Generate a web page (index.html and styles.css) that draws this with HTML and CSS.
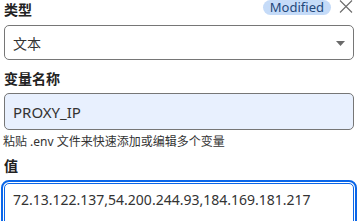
FILE: index.html
```html
<!DOCTYPE html>
<html lang="zh">
<head>
<meta charset="utf-8">
<link rel="stylesheet" href="styles.css">
</head>
<body>
<div class="panel">
  <div class="head">
    <label class="lbl">类型</label>
    <div class="tools">
      <span class="badge">Modified</span>
      <span class="close"><svg width="14" height="13" viewBox="0 0 14 13"><path d="M1 0.5 L13 12.5 M13 0.5 L1 12.5" stroke="#6b6b6b" stroke-width="1.1" fill="none"/></svg></span>
    </div>
  </div>
  <div class="select">
    <span>文本</span>
    <svg class="arrow" width="9" height="5" viewBox="0 0 9 5"><path d="M0 0 H9 L4.5 5 Z" fill="#6a6a6a"/></svg>
  </div>
  <label class="lbl lbl2">变量名称</label>
  <div class="input">PROXY_IP</div>
  <div class="hint">粘贴 .env 文件来快速添加或编辑多个变量</div>
  <label class="lbl lbl3">值</label>
  <div class="ta">72.13.122.137,54.200.244.93,184.169.181.217</div>
</div>
</body>
</html>
```
FILE: styles.css
```css
html, body {
  margin: 0;
  padding: 0;
  background: #fff;
  overflow: hidden;
}
.panel {
  width: 350px;
  padding: 0 5px 0 4px;
  font-family: "Noto Sans", "Noto Sans CJK SC", sans-serif;
  color: #222;
}
.head {
  display: flex;
  justify-content: space-between;
  align-items: flex-start;
  height: 20px;
  margin-bottom: 5px;
}
.lbl {
  display: block;
  font-size: 14px;
  line-height: 20px;
  font-weight: 700;
  color: #222;
}
.tools {
  display: flex;
  align-items: flex-start;
  gap: 8px;
}
.badge {
  height: 15px;
  padding: 0 7px;
  border-radius: 0 0 8px 8px / 0 0 8px 8px;
  border-radius: 8px;
  background: #c5dbf8;
  color: #23477a;
  font-size: 13px;
  line-height: 15px;
}
.close {
  display: flex;
  margin-right: 1px;
}
.select {
  box-sizing: border-box;
  height: 35px;
  border: 1px solid #767676;
  border-radius: 5px;
  display: flex;
  align-items: center;
  justify-content: space-between;
  padding: 0 8px;
  font-size: 14px;
  color: #333;
}
.arrow {
  margin-top: 1px;
}
.lbl2 {
  margin-top: 9px;
}
.input {
  box-sizing: border-box;
  margin-top: 4px;
  height: 37px;
  border: 1px solid #767676;
  border-radius: 5px;
  background: #e8f0fe;
  padding: 0 8px;
  display: flex;
  align-items: center;
  font-size: 15px;
  color: #333;
}
.hint {
  margin-top: 4px;
  margin-left: -1px;
  font-size: 12px;
  line-height: 16px;
  color: #333;
}
.lbl3 {
  margin-top: 6px;
}
.ta {
  box-sizing: border-box;
  margin-top: 7px;
  height: 60px;
  border: 1px solid #0a66e8;
  border-radius: 5px;
  outline: 2px solid #0a66e8;
  outline-offset: 1px;
  padding: 6px 8px;
  font-size: 14px;
  line-height: 20px;
  color: #333;
}
```
